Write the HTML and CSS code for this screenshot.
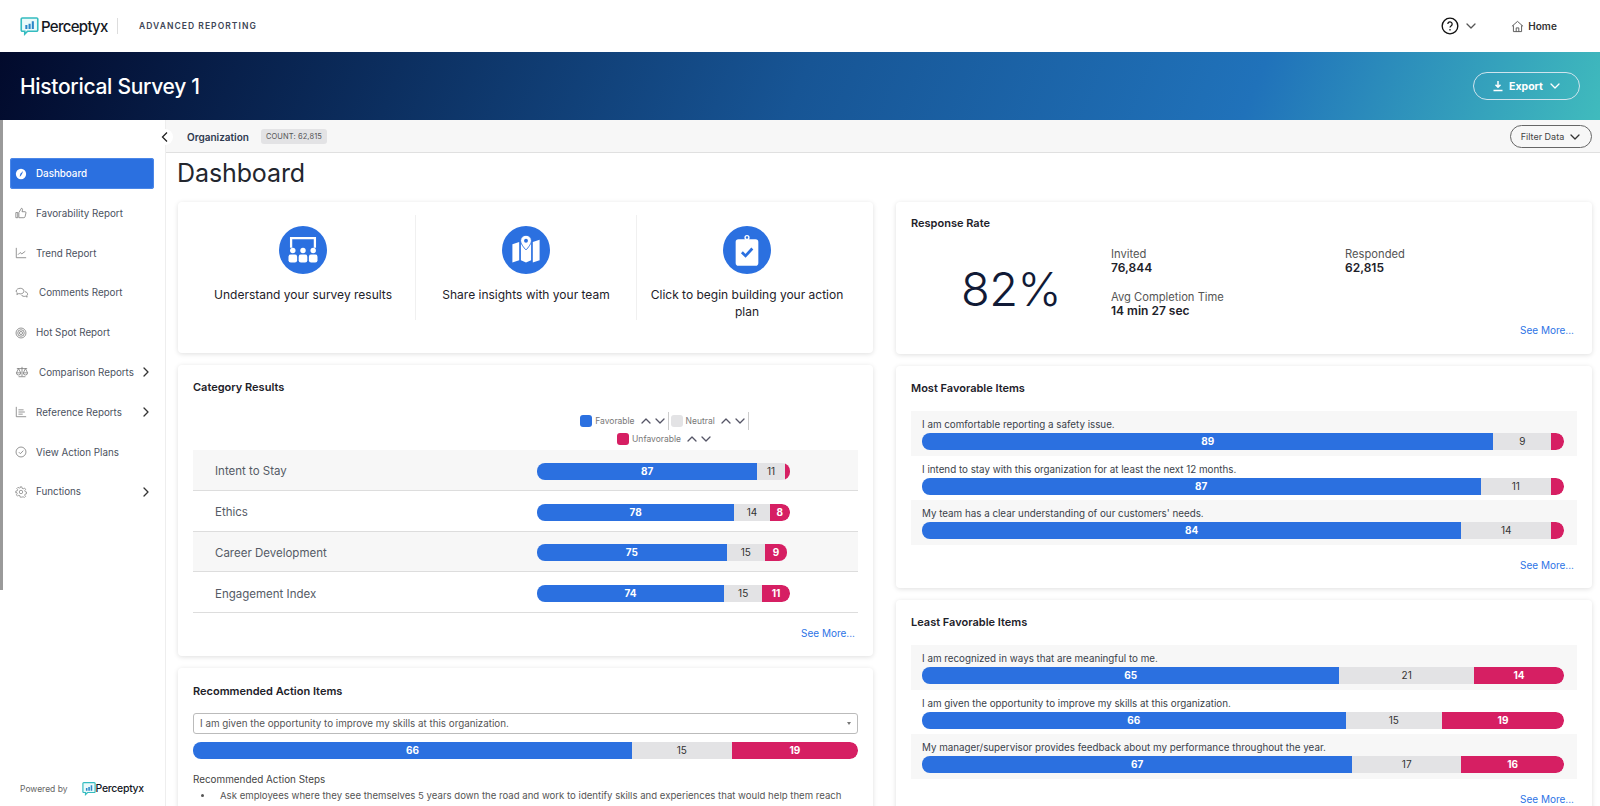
FILE: index.html
```html
<!DOCTYPE html>
<html lang="en">
<head>
<meta charset="utf-8">
<title>Historical Survey 1</title>
<link rel="stylesheet" href="styles.css">
</head>
<body>
<svg class="defs" width="0" height="0" aria-hidden="true">
  <symbol id="logo" viewBox="0 0 20 20">
    <path d="M2.500 1h15a1.200 1.200 0 0 1 1.200 1.200v11.600a1.200 1.200 0 0 1-1.200 1.200H8l-3 3v-3H2.500a1.200 1.200 0 0 1-1.200-1.200V2.200A1.200 1.200 0 0 1 2.500 1z" fill="#eafafa" stroke="#35bcc0" stroke-width="1.700"/>
    <path d="M5.600 8.500h2.200v4H5.600zM9 7h2.200v5.500H9zM12.400 4.500h2.200v8h-2.200z" fill="#2b86c8"/>
  </symbol>
  <symbol id="chev-d" viewBox="0 0 12 12"><path d="M2 4l4 4 4-4" fill="none" stroke="currentColor" stroke-width="1.300" stroke-linecap="round" stroke-linejoin="round"/></symbol>
  <symbol id="chev-u" viewBox="0 0 12 12"><path d="M2 8l4-4 4 4" fill="none" stroke="currentColor" stroke-width="1.300" stroke-linecap="round" stroke-linejoin="round"/></symbol>
  <symbol id="chev-r" viewBox="0 0 12 12"><path d="M4 2l4 4-4 4" fill="none" stroke="currentColor" stroke-width="1.300" stroke-linecap="round" stroke-linejoin="round"/></symbol>
</svg>

<header class="topbar">
  <svg class="logo-mark"><use href="#logo"/></svg>
  <span class="logo-text">Perceptyx</span>
  <span class="topbar-div"></span>
  <span class="product">ADVANCED REPORTING</span>
  <span class="spacer"></span>
  <svg class="help" viewBox="0 0 20 20"><circle cx="10" cy="10" r="8.700" fill="none" stroke="#111" stroke-width="1.500"/><path d="M7.600 7.800a2.400 2.400 0 1 1 3.600 2.100c-.8.500-1.200.9-1.200 1.800" fill="none" stroke="#111" stroke-width="1.400"/><circle cx="10" cy="14.300" r=".9" fill="#111"/></svg>
  <svg class="help-chev"><use href="#chev-d"/></svg>
  <svg class="home-ico" viewBox="0 0 14 14"><path d="M1 6.800L7 1.500l6 5.300M2.600 5.800v6.700h8.800V5.800M5.600 12.500V8.500h2.800v4" fill="none" stroke="#555" stroke-width="1"/></svg>
  <span class="home">Home</span>
</header>

<section class="banner">
  <h2 class="banner-title">Historical Survey 1</h2>
  <button class="export">
    <svg class="export-ico" viewBox="0 0 12 12"><path d="M6 1v6M3.500 4.800L6 7.300l2.500-2.500M1.500 10.500h9" fill="none" stroke="#fff" stroke-width="1.500"/></svg>
    <span>Export</span>
    <svg class="export-chev"><use href="#chev-d"/></svg>
  </button>
</section>

<div class="body-wrap">
  <span class="scroll-thumb"></span>
  <button class="collapse"><svg class="collapse-ico" viewBox="0 0 12 12"><path d="M8 1.500L3.500 6 8 10.500" fill="none" stroke="#222" stroke-width="1.300"/></svg></button>
  <aside class="sidebar">
    <nav class="nav">
      <a class="nav-item active">
        <svg class="nav-ico" viewBox="0 0 14 14"><circle cx="7" cy="7" r="6" fill="#fff"/><path d="M9.500 3.500L7.800 8 6 7z" fill="#2b70e0"/><path d="M6 7l1.800 1-2.300 2.500z" fill="#2b70e0"/></svg>
        <span>Dashboard</span>
      </a>
      <a class="nav-item">
        <svg class="nav-ico" viewBox="0 0 14 14"><path d="M1 6.500h2.200v6H1zM4.500 6.500L7.500 1.500c1.200 0 1.500 1 1.200 2L8.200 5.500h3.600c.8 0 1.200.7 1 1.400l-1.100 4.500c-.2.700-.7 1.100-1.300 1.100H4.500z" fill="none" stroke="#777" stroke-width=".9"/></svg>
        <span>Favorability Report</span>
      </a>
      <a class="nav-item">
        <svg class="nav-ico" viewBox="0 0 14 14"><path d="M1.500 1v11.500H13M3.500 9l2.500-2.500 2 1.500 4-3" fill="none" stroke="#777" stroke-width=".9"/></svg>
        <span>Trend Report</span>
      </a>
      <a class="nav-item wide">
        <svg class="nav-ico" viewBox="0 0 16 14"><path d="M6 1.500c2.500 0 4.300 1.500 4.300 3.300S8.500 8 6 8c-.6 0-1.200-.1-1.700-.3L2 8.800l.5-2C1.500 6.200 1.200 5.500 1.200 4.800 1.200 3 3.500 1.500 6 1.500z" fill="none" stroke="#777" stroke-width=".9"/><path d="M11.500 5.500c1.800.3 3 1.400 3 2.800 0 .7-.3 1.300-.9 1.800l.4 1.700-1.900-1c-1.800.5-4.100-.1-5-1.700" fill="none" stroke="#777" stroke-width=".9"/></svg>
        <span>Comments Report</span>
      </a>
      <a class="nav-item">
        <svg class="nav-ico" viewBox="0 0 14 14"><circle cx="7" cy="7" r="5.800" fill="none" stroke="#777" stroke-width=".9"/><circle cx="7" cy="7" r="3.800" fill="none" stroke="#777" stroke-width=".9"/><circle cx="7" cy="7" r="1.800" fill="none" stroke="#777" stroke-width=".9"/></svg>
        <span>Hot Spot Report</span>
      </a>
      <a class="nav-item wide">
        <svg class="nav-ico" viewBox="0 0 16 14"><path d="M8 1v11M4 12.500h8M2 3h12M4 3L1.500 8h5zM12 3L9.500 8h5zM1.500 8a2.500 2.500 0 0 0 5 0M9.500 8a2.500 2.500 0 0 0 5 0" fill="none" stroke="#777" stroke-width=".9"/></svg>
        <span>Comparison Reports</span>
        <svg class="nav-chev"><use href="#chev-r"/></svg>
      </a>
      <a class="nav-item">
        <svg class="nav-ico" viewBox="0 0 14 14"><path d="M1.500 1v11.500H13M4 4.500h6M4 7h7.500M4 9.500h5" fill="none" stroke="#777" stroke-width=".9"/></svg>
        <span>Reference Reports</span>
        <svg class="nav-chev"><use href="#chev-r"/></svg>
      </a>
      <a class="nav-item">
        <svg class="nav-ico" viewBox="0 0 14 14"><circle cx="7" cy="7" r="5.800" fill="none" stroke="#777" stroke-width=".9"/><path d="M4.500 7.200l1.800 1.800 3.400-3.600" fill="none" stroke="#777" stroke-width=".9"/></svg>
        <span>View Action Plans</span>
      </a>
      <a class="nav-item">
        <svg class="nav-ico" viewBox="0 0 14 14"><path d="M6 1h2l.3 1.700 1.300.6 1.500-.9 1.300 1.500-1 1.400.4 1.300 1.700.4v2l-1.700.4-.5 1.300 1 1.400-1.400 1.400-1.400-1-1.300.5L8 13H6l-.3-1.700-1.300-.5-1.400 1-1.400-1.400 1-1.400-.5-1.300L.9 8V6l1.700-.4.500-1.300-1-1.400 1.400-1.400 1.400 1 1.300-.6z" fill="none" stroke="#777" stroke-width=".8"/><circle cx="7" cy="7" r="2" fill="none" stroke="#777" stroke-width=".8"/></svg>
        <span>Functions</span>
        <svg class="nav-chev"><use href="#chev-r"/></svg>
      </a>
    </nav>
    <div class="powered">
      <span class="powered-by">Powered by</span>
      <svg class="powered-mark"><use href="#logo"/></svg>
      <span class="powered-name">Perceptyx</span>
    </div>
  </aside>

  <main class="main">
    <div class="subbar">
      <span class="org">Organization</span>
      <span class="count">COUNT: 62,815</span>
      <span class="spacer"></span>
      <button class="filter"><span>Filter Data</span><svg class="filter-chev"><use href="#chev-d"/></svg></button>
    </div>
    <h1 class="page-title">Dashboard</h1>
    <div class="columns">
      <div class="col">
        <section class="card quick">
          <div class="quick-item">
            <span class="quick-circle"><svg class="quick-ico" viewBox="0 0 30 30"><path d="M4.500 13V4.500h21V13" fill="none" stroke="#fff" stroke-width="2"/><circle cx="6" cy="15.500" r="2.400" fill="#fff"/><circle cx="15" cy="15.500" r="2.400" fill="#fff"/><circle cx="24" cy="15.500" r="2.400" fill="#fff"/><rect x="2.200" y="19" width="7.600" height="7" rx="2" fill="#fff"/><rect x="11.200" y="19" width="7.600" height="7" rx="2" fill="#fff"/><rect x="20.200" y="19" width="7.600" height="7" rx="2" fill="#fff"/></svg></span>
            <p class="quick-text">Understand your survey results</p>
          </div>
          <div class="quick-item">
            <span class="quick-circle"><svg class="quick-ico" viewBox="0 0 30 30"><path d="M3 10l6-2v16l-6 2zM21 8l6-2v18l-6 2zM10.500 9l3 1.500 1.500 4 1.500-4 3-2V24l-4.500 2-4.500-2z" fill="#fff"/><path d="M15 2a4.800 4.800 0 0 0-4.800 4.800C10.200 10 15 15 15 15s4.800-5 4.800-8.200A4.800 4.800 0 0 0 15 2z" fill="#fff" stroke="#2b70e0" stroke-width=".8"/><circle cx="15" cy="6.800" r="1.700" fill="#2b70e0"/></svg></span>
            <p class="quick-text">Share insights with your team</p>
          </div>
          <div class="quick-item">
            <span class="quick-circle"><svg class="quick-ico" viewBox="0 0 30 30"><rect x="5" y="5.500" width="20" height="23.400" rx="2.500" fill="#fff"/><circle cx="15" cy="4" r="1.700" fill="none" stroke="#fff" stroke-width="1.200"/><path d="M10.500 17l3.200 3.200 6-6.500" fill="none" stroke="#2b70e0" stroke-width="2.400"/></svg></span>
            <p class="quick-text">Click to begin building your action plan</p>
          </div>
        </section>

        <section class="card cat">
          <h3 class="card-title">Category Results</h3>
          <div class="legend">
            <div class="legend-row">
              <span class="legend-item sep"><i class="swatch fav"></i><span>Favorable</span><svg class="sort"><use href="#chev-u"/></svg><svg class="sort"><use href="#chev-d"/></svg></span>
              <span class="legend-item sep"><i class="swatch neu"></i><span>Neutral</span><svg class="sort"><use href="#chev-u"/></svg><svg class="sort"><use href="#chev-d"/></svg></span>
            </div>
            <div class="legend-row">
              <span class="legend-item"><i class="swatch unf"></i><span>Unfavorable</span><svg class="sort"><use href="#chev-u"/></svg><svg class="sort"><use href="#chev-d"/></svg></span>
            </div>
          </div>
          <div class="cat-row shade"><span class="cat-label">Intent to Stay</span><div class="bar cat-bar"><span class="seg s-fav" style="width:87%">87</span><span class="seg s-neu" style="width:11%">11</span><span class="seg s-unf" style="width:2%"></span></div></div>
          <div class="cat-row"><span class="cat-label">Ethics</span><div class="bar cat-bar"><span class="seg s-fav" style="width:78%">78</span><span class="seg s-neu" style="width:14%">14</span><span class="seg s-unf" style="width:8%">8</span></div></div>
          <div class="cat-row shade"><span class="cat-label">Career Development</span><div class="bar cat-bar"><span class="seg s-fav" style="width:75%">75</span><span class="seg s-neu" style="width:15%">15</span><span class="seg s-unf" style="width:9%">9</span></div></div>
          <div class="cat-row"><span class="cat-label">Engagement Index</span><div class="bar cat-bar"><span class="seg s-fav" style="width:74%">74</span><span class="seg s-neu" style="width:15%">15</span><span class="seg s-unf" style="width:11%">11</span></div></div>
          <a class="see-more cat-more">See More...</a>
        </section>

        <section class="card rec">
          <h3 class="card-title">Recommended Action Items</h3>
          <div class="select"><span>I am given the opportunity to improve my skills at this organization.</span><i class="select-caret"></i></div>
          <div class="bar rec-bar"><span class="seg s-fav" style="width:66%">66</span><span class="seg s-neu" style="width:15%">15</span><span class="seg s-unf" style="width:19%">19</span></div>
          <p class="steps-title">Recommended Action Steps</p>
          <ul class="steps"><li>Ask employees where they see themselves 5 years down the road and work to identify skills and experiences that would help them reach</li></ul>
        </section>
      </div>

      <div class="col">
        <section class="card resp">
          <h3 class="card-title">Response Rate</h3>
          <div class="resp-body">
            <div class="resp-pct">82%</div>
            <div class="resp-stats">
              <div class="stat"><span class="stat-label">Invited</span><strong class="stat-value">76,844</strong></div>
              <div class="stat"><span class="stat-label">Responded</span><strong class="stat-value">62,815</strong></div>
              <div class="stat"><span class="stat-label">Avg Completion Time</span><strong class="stat-value">14 min 27 sec</strong></div>
            </div>
          </div>
          <a class="see-more resp-more">See More...</a>
        </section>

        <section class="card items most">
          <h3 class="card-title">Most Favorable Items</h3>
          <div class="item-list">
            <div class="item shade"><p class="item-text">I am comfortable reporting a safety issue.</p><div class="bar"><span class="seg s-fav" style="width:89%">89</span><span class="seg s-neu" style="width:9%">9</span><span class="seg s-unf" style="width:2%"></span></div></div>
            <div class="item"><p class="item-text">I intend to stay with this organization for at least the next 12 months.</p><div class="bar"><span class="seg s-fav" style="width:87%">87</span><span class="seg s-neu" style="width:11%">11</span><span class="seg s-unf" style="width:2%"></span></div></div>
            <div class="item shade"><p class="item-text">My team has a clear understanding of our customers' needs.</p><div class="bar"><span class="seg s-fav" style="width:84%">84</span><span class="seg s-neu" style="width:14%">14</span><span class="seg s-unf" style="width:2%"></span></div></div>
          </div>
          <a class="see-more items-more">See More...</a>
        </section>

        <section class="card items least">
          <h3 class="card-title">Least Favorable Items</h3>
          <div class="item-list">
            <div class="item shade"><p class="item-text">I am recognized in ways that are meaningful to me.</p><div class="bar"><span class="seg s-fav" style="width:65%">65</span><span class="seg s-neu" style="width:21%">21</span><span class="seg s-unf" style="width:14%">14</span></div></div>
            <div class="item"><p class="item-text">I am given the opportunity to improve my skills at this organization.</p><div class="bar"><span class="seg s-fav" style="width:66%">66</span><span class="seg s-neu" style="width:15%">15</span><span class="seg s-unf" style="width:19%">19</span></div></div>
            <div class="item shade"><p class="item-text">My manager/supervisor provides feedback about my performance throughout the year.</p><div class="bar"><span class="seg s-fav" style="width:67%">67</span><span class="seg s-neu" style="width:17%">17</span><span class="seg s-unf" style="width:16%">16</span></div></div>
          </div>
          <a class="see-more items-more">See More...</a>
        </section>
      </div>
    </div>
  </main>
</div>
</body>
</html>
```

FILE: styles.css
```css
* { box-sizing: border-box; }
html, body { margin: 0; height: 806px; overflow: hidden; background: #fff; }
body { font-family: Inter, "Liberation Sans", sans-serif; color: #1f2430; display: flex; flex-direction: column; }
.defs { position: absolute; }
h1, h2, h3, p, ul { margin: 0; padding: 0; }
button { font-family: inherit; background: none; cursor: pointer; }
.spacer { flex: 1; }

/* top bar */
.topbar { height: 52px; flex: none; display: flex; align-items: center; padding-left: 20px; padding-right: 43px; }
.logo-mark { width: 19px; height: 19px; margin-right: 2px; }
.logo-text { font-size: 15px; font-weight: 500; letter-spacing: -.7px; color: #14181f; width: 76px; }
.topbar-div { width: 1px; height: 16px; background: #ddd; }
.product { margin-left: 21px; font-size: 8.500px; font-weight: 600; letter-spacing: 1.050px; color: #3d4656; }
.help { width: 18px; height: 18px; color: #111; }
.help-chev { width: 12px; height: 12px; margin-left: 6px; color: #555; }
.home-ico { width: 13px; height: 13px; margin-left: 34px; }
.home { margin-left: 4px; font-size: 10px; font-weight: 600; color: #333; letter-spacing: .1px; }

/* banner */
.banner { height: 68px; flex: none; display: flex; align-items: center; justify-content: space-between; padding: 0 20px; background: linear-gradient(112deg, #020a2c 0%, #0c2f60 25%, #175595 50%, #2072ba 78%, #40bbbd 100%); }
.banner-title { color: #fff; font-size: 21px; font-weight: 500; letter-spacing: -.3px; }
.export { width: 107px; height: 28px; display: flex; align-items: center; justify-content: center; gap: 5px; border: 1.5px solid #cfe4ee; border-radius: 14px; color: #fff; font-size: 10.500px; font-weight: 700; }
.export-ico { width: 12px; height: 12px; }
.export-chev { width: 12px; height: 12px; margin-left: 1px; }

/* page body */
.body-wrap { position: relative; flex: 1; display: flex; min-height: 0; }
.scroll-thumb { position: absolute; left: 0; top: 0; width: 3px; height: 470px; background: #9a9a9a; }
.collapse { position: absolute; z-index: 2; left: 157px; top: 9px; width: 16px; height: 16px; padding: 0; border: 0; border-radius: 50%; background: #fff; display: flex; align-items: center; justify-content: center; }
.collapse-ico { width: 12px; height: 12px; }
.sidebar { width: 166px; flex: none; border-right: 1px solid #eee; display: flex; flex-direction: column; padding: 38px 11px 0 10px; }
.nav { display: flex; flex-direction: column; gap: 8.800px; }
.nav-item { height: 31px; display: flex; align-items: center; padding-left: 5px; border-radius: 3px; font-size: 9.800px; color: #4a5160; white-space: nowrap; }
.nav-item.active { background: #2b70e0; color: #fff; font-weight: 500; box-shadow: 0 0 0 1px #4b87e8 inset; }
.nav-ico { width: 12px; height: 12px; flex: none; margin-right: 9px; }
.nav-item.wide .nav-ico { width: 14px; margin-right: 10px; }
.nav-chev { width: 12px; height: 12px; margin-left: auto; margin-right: 2px; color: #333; }
.powered { margin-top: auto; height: 24px; display: flex; align-items: flex-start; padding: 0 0 0 10px; }
.powered-by { font-size: 8.500px; color: #666; line-height: 15px; margin-right: 14px; }
.powered-mark { width: 14px; height: 14px; margin-right: 0; }
.powered-name { font-size: 10.500px; font-weight: 500; line-height: 14px; letter-spacing: -.3px; color: #14181f; }

.main { position: relative; flex: 1; min-width: 0; display: flex; flex-direction: column; overflow: hidden; }
.subbar { height: 33px; flex: none; display: flex; align-items: center; padding: 1px 8px 0 21px; background: #f7f7f7; border-bottom: 1px solid #e0e0e0; }
.org { font-size: 10px; font-weight: 600; color: #2e3a4f; }
.count { margin-left: 12px; padding: 0 5px; height: 15px; line-height: 15px; border-radius: 3px; background: #e3e3e5; font-size: 7.500px; color: #555; letter-spacing: .1px; }
.filter { width: 82px; height: 23px; display: flex; align-items: center; justify-content: center; gap: 5px; border: 1px solid #666; border-radius: 12px; font-size: 9px; color: #444; padding: 0; }
.filter-chev { width: 12px; height: 12px; color: #333; }
.page-title { height: 49px; flex: none; padding: 2px 0 0 11px; font-size: 25px; font-weight: 400; line-height: 36px; color: #23262e; letter-spacing: -.1px; }

.columns { display: grid; grid-template-columns: 695px 1fr; gap: 23px; padding: 0 8px 0 12px; }
.col { display: flex; flex-direction: column; gap: 12px; min-width: 0; }
.card { background: #fff; border-radius: 4px; box-shadow: 0 1px 5px rgba(0,0,0,.13); padding: 14px 15px; flex: none; position: relative; }
.card-title { font-size: 11px; font-weight: 600; line-height: 14px; color: #1d2129; }

/* quick links */
.quick { height: 151px; padding: 13px 16px 0 13px; display: grid; grid-template-columns: 224px 221px 1fr; align-items: start; }
.quick-item { height: 105px; display: flex; flex-direction: column; align-items: center; padding: 11px 12px 0; border-left: 1px solid #f0f0f0; text-align: center; }
.quick-item:first-child { border-left: 0; }
.quick-circle { width: 48px; height: 48px; flex: none; border-radius: 50%; background: #2b70e0; display: flex; align-items: center; justify-content: center; }
.quick-ico { width: 34px; height: 34px; }
.quick-text { margin-top: 12px; font-size: 12px; line-height: 17px; color: #1d2129; }

/* category card */
.cat { height: 291px; padding-top: 15px; }
.legend { display: flex; flex-direction: column; align-items: center; margin: 18px 0 2px; padding-left: 280px; }
.legend-row { display: flex; justify-content: center; height: 18px; align-items: center; }
.legend-item { display: flex; align-items: center; font-size: 8.500px; color: #777; padding-right: 2px; height: 18px; }
.legend-item.sep { border-right: 1px solid #ccc; margin-right: 2px; }
.swatch { width: 12px; height: 12px; border-radius: 3px; margin-right: 3px; flex: none; }
.swatch.fav { background: #2b70e0; }
.swatch.neu { background: #e3e3e5; }
.swatch.unf { background: #d61f63; }
.sort { width: 12px; height: 12px; margin-left: 2px; color: #556; }
.legend-item span + .sort { margin-left: 5px; }
.cat-row { height: 40.750px; display: flex; align-items: center; border-bottom: 1px solid #ddd; padding: 3px 0 0 22px; }
.shade { background: #f7f7f7; }
.cat-label { width: 322px; font-size: 11.500px; color: #555b66; }
.cat-bar { width: 253px; }
.bar { display: flex; height: 17px; border-radius: 8px; overflow: hidden; font-size: 10px; line-height: 17px; text-align: center; flex: none; }
.seg { display: block; flex: none; }
.s-fav { background: #2b70e0; color: #fff; font-weight: 700; }
.s-neu { background: #e3e3e5; color: #333; }
.s-unf { background: #d61f63; color: #fff; font-weight: 700; border-radius: 0 8px 8px 0; }
.see-more { display: block; text-align: right; font-size: 10px; line-height: 14px; color: #2d74e6; }
.cat-more { margin-top: 13px; padding-right: 3px; }

/* recommended */
.rec { height: 200px; padding-top: 16px; }
.select { margin-top: 15px; height: 21px; display: flex; align-items: center; justify-content: space-between; padding: 0 6px; border: 1px solid #bbb; border-radius: 3px; font-size: 9.800px; color: #555; }
.select-caret { width: 0; height: 0; border-left: 2.500px solid transparent; border-right: 2.500px solid transparent; border-top: 3px solid #777; }
.rec-bar { margin-top: 8px; }
.steps-title { margin-top: 13px; font-size: 9.900px; line-height: 14px; color: #444; }
.steps { margin-top: 2px; padding-left: 21px; font-size: 9.600px; line-height: 16px; color: #555; white-space: nowrap; }
.steps li { padding-left: 6px; }

/* response */
.resp { height: 152px; }
.resp-body { display: flex; }
.resp-pct { width: 200px; padding: 31px 0 0 50px; font-size: 47px; font-weight: 300; line-height: 56px; color: #111a36; letter-spacing: -.6px; }
.resp-stats { flex: 1; display: grid; grid-template-columns: 234px 1fr; row-gap: 15px; padding-top: 17px; align-content: start; }
.stat { display: flex; flex-direction: column; font-size: 11.200px; line-height: 14px; }
.stat-label { color: #555; }
.stat-value { font-size: 12px; font-weight: 600; color: #1d2129; }
.resp-more { margin-top: 5px; padding-right: 3px; }

/* item lists */
.items { padding-top: 15px; }
.most { height: 222px; }
.least { height: 215px; }
.item-list { margin-top: 16px; display: flex; flex-direction: column; }
.item { height: 44.700px; padding: 6px 13px 0 11px; }
.item-text { font-size: 9.800px; line-height: 15px; color: #3a3f4a; margin-bottom: 1px; white-space: nowrap; }
.items-more { margin-top: 12.500px; padding-right: 3px; }
```
